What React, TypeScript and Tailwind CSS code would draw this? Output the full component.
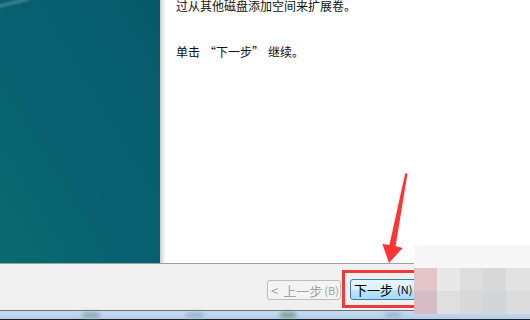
import React from "react";

const mosaic = [
  ["#f7f7f7", "#f7f7f7", "#f7f7f7", "#f7f7f7", "#f7f7f7"],
  ["#e3c4c7", "#e8e8e8", "#dddddd", "#d9d9d9", "#e2e2e2"],
  ["#d6bcc5", "#dfdfe2", "#d6d8da", "#d3d6d9", "#dcdcde"],
];

export default function App() {
  const font = { fontFamily: '"Noto Sans CJK SC", "Noto Sans", sans-serif' };
  return (
    <div className="relative w-[530px] h-[320px] overflow-hidden bg-white" style={font}>
      <div className="flex h-[263px]">
        <div className="relative w-[160px] h-full bg-[linear-gradient(to_top_right,#0a6b70,#076070_45%,#065b6a)] overflow-hidden">
          <div className="absolute -left-[10px] top-[2px] w-[40px] h-[3px] bg-[#3f8890] rotate-[-14deg] blur-[1px]" />
        </div>
        <div className="w-[5px] h-full bg-[linear-gradient(to_right,#c9c9c9,#e6e6e6,#f5f5f5)]" />
        <div className="flex-1 pl-[11px] leading-[16px] text-[#111]">
          <div className="-mt-[2px] text-[12px]">过从其他磁盘添加空间来扩展卷。</div>
          <div className="mt-[30px] text-[12px]">
            单击<span className="ml-[4px]">“</span>下一步<span className="mr-[4px]">”</span>继续。
          </div>
        </div>
      </div>
      <div className="h-[47px] border-t border-[#a0a0a0] bg-[#f0f0f0] flex items-start pt-[16px] pl-[267px] gap-[9px] text-[13px]">
        <div className="h-[20px] w-[74px] rounded-[3px] border border-[#bcbcbc] bg-[#f4f4f4] flex items-center pl-[3px] text-[#a2a2a2] leading-none whitespace-nowrap">
          <span className="mr-[5px]">&lt;</span>上一步<span className="ml-[2px] text-[11px]">(B)</span>
        </div>
        <div className="h-[21px] -mt-[1px] w-[80px] rounded-[3px] border border-[#3c7fb1] bg-[linear-gradient(to_bottom,#eaf6fd,#d9f0fc_50%,#bee6fd_51%,#a7d9f5)] flex items-center pl-[3px] text-black leading-none whitespace-nowrap">
          下一步<span className="ml-[4px] text-[11px]">(N)</span>
        </div>
      </div>
      <div className="relative h-[10px] border-t border-[#6f6f6f] border-b border-b-[#202020] bg-[linear-gradient(to_bottom,#c7dcf0,#b3cdea)]">
        <span className="absolute left-[82px] top-[1px] w-[18px] h-[6px] rounded-full bg-[#7d9a94] blur-[2px] opacity-70" />
        <span className="absolute left-[186px] top-[1px] w-[18px] h-[6px] rounded-full bg-[#8aa2bb] blur-[2px] opacity-60" />
        <span className="absolute left-[280px] top-[1px] w-[16px] h-[6px] rounded-full bg-[#5f8a6e] blur-[2px] opacity-70" />
        <span className="absolute left-[385px] top-[1px] w-[16px] h-[6px] rounded-full bg-[#8aa2bb] blur-[2px] opacity-60" />
      </div>

      <div className="absolute left-[342px] top-[270px] w-[90px] h-[38px] border-[3px] border-[#ee3a3a]" />

      <div className="absolute left-[414px] top-[245px] grid grid-cols-[23px_23px_23px_23px_24px] grid-rows-[23px_23px_23px]">
        {mosaic.flat().map((c, i) => (
          <div key={i} style={{ backgroundColor: c }} />
        ))}
      </div>

      <svg className="absolute inset-0 pointer-events-none" width="530" height="320">
        <polygon
          points="405.3,173 407.4,174 395.6,246 402.6,248 389,263 382.4,244 389.4,245"
          fill="#fe3535"
        />
      </svg>
    </div>
  );
}
